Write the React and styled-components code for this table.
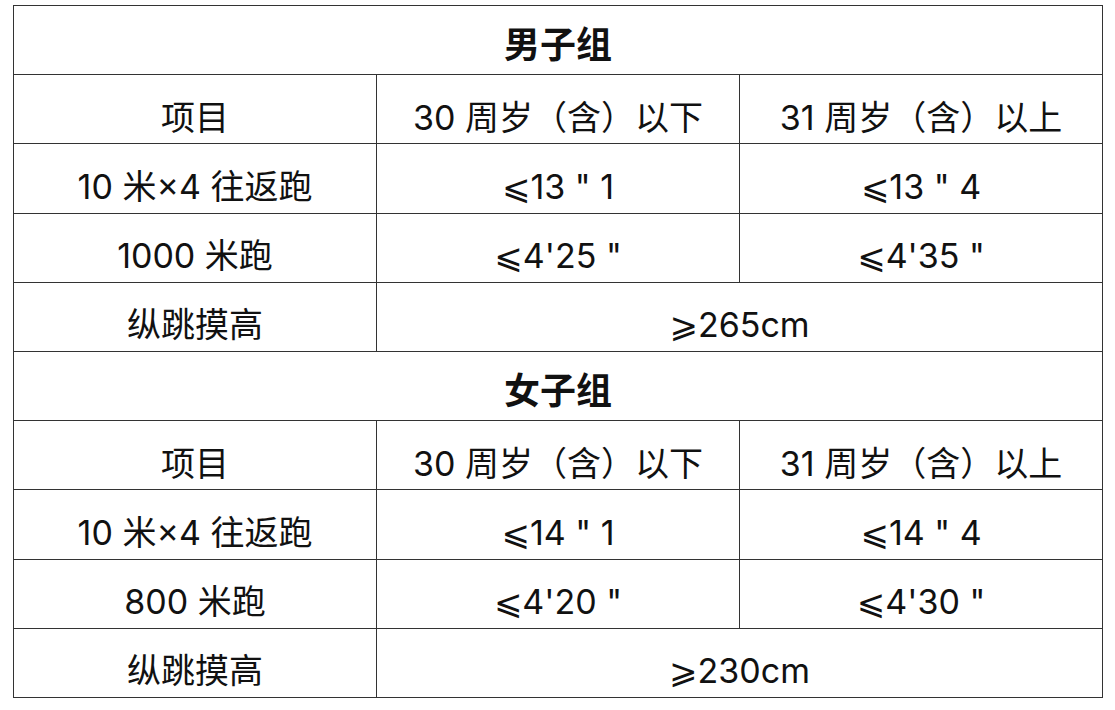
import React from "react";
import styled, { createGlobalStyle } from "styled-components";

const Global = createGlobalStyle`
  html, body { margin: 0; padding: 0; background: #fff; }
  body { font-family: Inter, "DejaVu Sans", "Noto Sans CJK SC", sans-serif; color: #111; }
`;

const Page = styled.div`
  padding: 5px 0 0 13px;
`;

const Table = styled.table`
  width: 1090px;
  border-collapse: collapse;
  table-layout: fixed;
  border: 1.5px solid #555;
`;

const Row = styled.tr`
  height: 69.2px;
`;

const Cell = styled.td`
  padding: ${(p) => (p.$bold ? 10 : 17)}px 0 0 0;
  box-sizing: border-box;
  border: 1px solid #333;
  text-align: center;
  vertical-align: middle;
  font-size: ${(p) => (p.$bold ? 36 : 34)}px;
  font-weight: ${(p) => (p.$bold ? 700 : 400)};
  line-height: 1;
  white-space: nowrap;
`;

const groups = [
  {
    title: "男子组",
    rows: [
      ["10 米×4 往返跑", "⩽13 \" 1", "⩽13 \" 4"],
      ["1000 米跑", "⩽4'25 \"", "⩽4'35 \""],
    ],
    jump: "⩾265cm",
  },
  {
    title: "女子组",
    rows: [
      ["10 米×4 往返跑", "⩽14 \" 1", "⩽14 \" 4"],
      ["800 米跑", "⩽4'20 \"", "⩽4'30 \""],
    ],
    jump: "⩾230cm",
  },
];

export default function App() {
  return (
    <Page>
      <Global />
      <Table>
        <colgroup>
          <col style={{ width: "363px" }} />
          <col style={{ width: "363px" }} />
          <col />
        </colgroup>
        <tbody>
          {groups.map((g) => (
            <React.Fragment key={g.title}>
              <Row>
                <Cell colSpan={3} $bold>{g.title}</Cell>
              </Row>
              <Row>
                <Cell>项目</Cell>
                <Cell>30 周岁（含）以下</Cell>
                <Cell>31 周岁（含）以上</Cell>
              </Row>
              {g.rows.map((r) => (
                <Row key={r[0]}>
                  {r.map((c, i) => (
                    <Cell key={i}>{c}</Cell>
                  ))}
                </Row>
              ))}
              <Row>
                <Cell>纵跳摸高</Cell>
                <Cell colSpan={2}>{g.jump}</Cell>
              </Row>
            </React.Fragment>
          ))}
        </tbody>
      </Table>
    </Page>
  );
}
